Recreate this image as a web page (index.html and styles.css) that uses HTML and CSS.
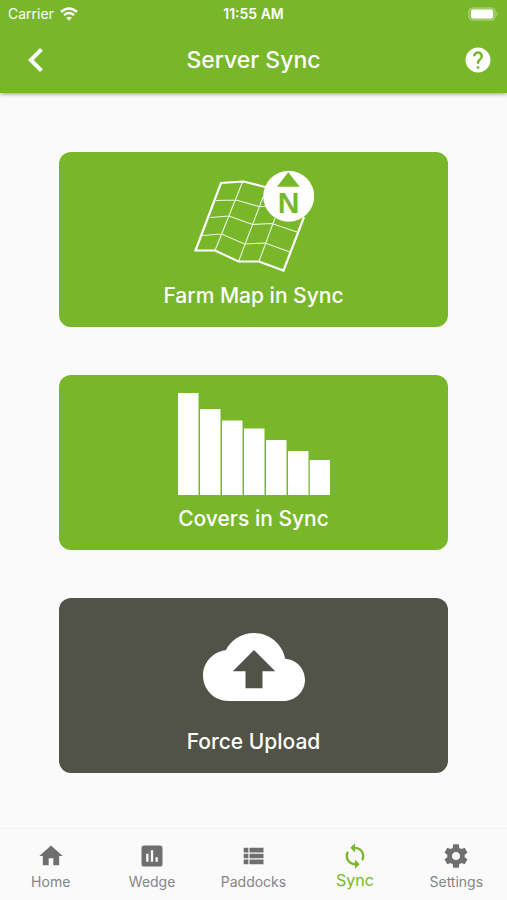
FILE: index.html
```html
<!DOCTYPE html>
<html lang="en">
<head>
<meta charset="utf-8">
<meta name="viewport" content="width=device-width, initial-scale=1">
<title>Server Sync</title>
<link rel="stylesheet" href="styles.css">
</head>
<body>
<header class="header">
  <div class="status">
    <div class="carrier">
      <span>Carrier</span>
      <svg class="wifi" viewBox="0 0 18 14" aria-hidden="true">
        <path d="M1 5Q9-2 17 5" fill="none" stroke="#fff" stroke-width="2.6"/>
        <path d="M4 8.2Q9 4 14 8.2" fill="none" stroke="#fff" stroke-width="2.4"/>
        <path d="M9 13.8 6.2 10.8Q9 8.6 11.8 10.8z" fill="#fff"/>
      </svg>
    </div>
    <time class="clock">11:55 AM</time>
    <svg class="battery" viewBox="0 0 31 14" aria-hidden="true">
      <rect x=".8" y=".8" width="26.4" height="12.4" rx="4" fill="#fff" fill-opacity=".2" stroke="#fff" stroke-opacity=".25" stroke-width="1.2"/>
      <rect x="3" y="2.6" width="22" height="8.8" rx="2" fill="#fff"/>
      <path d="M28.6 4.8q2 2.2 0 4.4z" fill="#fff" fill-opacity=".5"/>
    </svg>
  </div>
  <div class="bar">
    <button class="bar-button back" type="button" aria-label="Back">
      <svg viewBox="0 0 24 24"><path d="M15.41 7.41 14 6l-6 6 6 6 1.41-1.41L10.83 12z"/></svg>
    </button>
    <h1 class="title">Server Sync</h1>
    <button class="bar-button help" type="button" aria-label="Help">
      <svg viewBox="0 0 24 24"><path d="M12 2C6.48 2 2 6.48 2 12s4.48 10 10 10 10-4.48 10-10S17.52 2 12 2zm1 17h-2v-2h2v2zm2.07-7.75-.9.92C13.45 12.9 13 13.5 13 15h-2v-.5c0-1.1.45-2.1 1.17-2.83l1.24-1.26c.37-.36.59-.86.59-1.41 0-1.1-.9-2-2-2s-2 .9-2 2H8c0-2.21 1.79-4 4-4s4 1.79 4 4c0 .88-.36 1.68-.93 2.25z"/></svg>
    </button>
  </div>
</header>
<main class="content">
  <button class="card" type="button">
    <svg class="map-icon" viewBox="0 0 120 102" aria-hidden="true">
      <g fill="none" stroke="#fff">
        <path stroke-width="1.1" stroke-opacity=".85" d="M48.5 12 21 80.5M69 27 44.5 91.5M81 48 65 91.5M22 30.5 42 30l23 6.500h6M16.500 47.500 35 46l23.500 8.500 19.500-1 25 8.500M8 65.500 27.500 64l23 10L71 73l25 9"/>
        <path stroke-width="2.200" d="M71 17 49.500 11.500 27 13 1.500 80.500H21L44.500 91.500H65L89.500 100.500 110 47"/>
      </g>
      <circle cx="94.700" cy="26.300" r="25.500" fill="#fff"/>
      <path class="compass" d="M94.300 2.300 83 16.700h22.700z"/>
      <text class="compass" x="94.700" y="42.500" text-anchor="middle">N</text>
    </svg>
    <span class="card-label">Farm Map in Sync</span>
  </button>
  <button class="card" type="button">
    <svg class="bars-icon" viewBox="0 0 152 102" aria-hidden="true">
      <path fill="#fff" d="M0 0h20.500v102H0zM22 16h20.500v86H22zM44 27.500h20.500v74.500H44zM66 35.500h20.500v66.500H66zM88 47h20.500v55H88zM110 58h20.500v44H110zM131.800 67H152v35h-20.200z"/>
    </svg>
    <span class="card-label">Covers in Sync</span>
  </button>
  <button class="card card-dark" type="button">
    <svg class="cloud-icon" viewBox="0 0 24 24" aria-hidden="true">
      <path fill="#fff" d="M19.350 10.040C18.670 6.590 15.640 4 12 4 9.110 4 6.600 5.640 5.350 8.040 2.340 8.360 0 10.910 0 14c0 3.310 2.690 6 6 6h13c2.760 0 5-2.240 5-5 0-2.640-2.050-4.780-4.650-4.960zM14 13v4h-4v-4H7l5-5 5 5h-3z"/>
    </svg>
    <span class="card-label">Force Upload</span>
  </button>
</main>
<nav class="tabs">
  <a class="tab" href="#home">
    <svg viewBox="0 0 24 24"><path d="M10 20v-6h4v6h5v-8h3L12 3 2 12h3v8z"/></svg>
    <span>Home</span>
  </a>
  <a class="tab" href="#wedge">
    <svg viewBox="0 0 24 24"><path d="M19 3H5c-1.100 0-2 .9-2 2v14c0 1.100.9 2 2 2h14c1.100 0 2-.9 2-2V5c0-1.100-.9-2-2-2zM9 17H7v-7h2v7zm4 0h-2V7h2v10zm4 0h-2v-4h2v4z"/></svg>
    <span>Wedge</span>
  </a>
  <a class="tab" href="#paddocks">
    <svg viewBox="0 0 24 24"><path d="M4 14h4v-4H4v4zm0 5h4v-4H4v4zM4 9h4V5H4v4zm5 5h12v-4H9v4zm0 5h12v-4H9v4zM9 5v4h12V5H9z"/></svg>
    <span>Paddocks</span>
  </a>
  <a class="tab tab-active" href="#sync" aria-current="page">
    <svg viewBox="0 0 24 24"><path d="M12 4V1L8 5l4 4V6c3.310 0 6 2.690 6 6 0 1.010-.25 1.970-.7 2.800l1.460 1.460C19.540 15.030 20 13.570 20 12c0-4.420-3.580-8-8-8zm0 14c-3.310 0-6-2.690-6-6 0-1.010.25-1.970.7-2.800L5.240 7.740C4.460 8.970 4 10.430 4 12c0 4.420 3.580 8 8 8v3l4-4-4-4v3z"/></svg>
    <span>Sync</span>
  </a>
  <a class="tab" href="#settings">
    <svg viewBox="0 0 24 24"><path d="M19.430 12.980c.04-.32.07-.64.07-.98s-.03-.66-.07-.98l2.110-1.650c.19-.15.24-.42.12-.64l-2-3.460c-.12-.22-.39-.3-.61-.22l-2.490 1c-.52-.4-1.080-.73-1.690-.98l-.38-2.650C14.460 2.180 14.250 2 14 2h-4c-.25 0-.46.18-.49.42l-.38 2.650c-.61.25-1.170.59-1.690.98l-2.490-1c-.23-.09-.49 0-.61.22l-2 3.460c-.13.22-.07.49.12.64l2.110 1.650c-.04.32-.07.65-.07.98s.03.66.07.98l-2.110 1.650c-.19.15-.24.42-.12.64l2 3.460c.12.22.39.3.61.22l2.490-1c.52.4 1.080.73 1.690.98l.38 2.650c.03.24.24.42.49.42h4c.25 0 .46-.18.49-.42l.38-2.650c.61-.25 1.170-.59 1.690-.98l2.490 1c.23.09.49 0 .61-.22l2-3.460c.12-.22.07-.49-.12-.64l-2.110-1.650zM12 15.500c-1.930 0-3.500-1.570-3.500-3.500s1.570-3.500 3.500-3.500 3.500 1.570 3.500 3.500-1.570 3.500-3.500 3.500z"/></svg>
    <span>Settings</span>
  </a>
</nav>
</body>
</html>
```
FILE: styles.css
```css
:root {
  --green: #79b72a;
  --dark: #525348;
  --grey: #6f6f6f;
}

* {
  box-sizing: border-box;
}

body {
  margin: 0;
  min-height: 100vh;
  display: flex;
  flex-direction: column;
  background: #fafafa;
  font-family: Inter, "Liberation Sans", sans-serif;
}

button {
  margin: 0;
  padding: 0;
  border: 0;
  background: none;
  color: inherit;
  font: inherit;
}

svg {
  display: block;
  fill: currentColor;
}

.header {
  background: var(--green);
  color: #fff;
  box-shadow: 0 1px 4px rgba(0, 0, 0, 0.4);
}

.status {
  display: grid;
  grid-template-columns: 1fr auto 1fr;
  align-items: center;
  height: 27px;
  padding: 0 8px;
  font-size: 14px;
}

.carrier {
  display: flex;
  align-items: center;
  gap: 6px;
}

.wifi {
  width: 18px;
  height: 14px;
}

.clock {
  font-weight: 600;
}

.battery {
  width: 31px;
  height: 14px;
  justify-self: end;
}

.bar {
  display: grid;
  grid-template-columns: 60px 1fr 60px;
  align-items: center;
  height: 66px;
}

.bar-button {
  display: grid;
  place-items: center;
  height: 48px;
}

.back {
  padding-left: 12px;
}

.back svg {
  width: 48px;
  height: 48px;
}

.help svg {
  width: 30px;
  height: 30px;
}

.title {
  margin: 0;
  font-size: 23px;
  font-weight: 500;
  text-align: center;
}

.content {
  flex: 1;
  display: flex;
  flex-direction: column;
  gap: 48px;
  padding: 59px 59px 54px;
}

.card {
  display: flex;
  flex-direction: column;
  align-items: center;
  gap: 8px;
  padding: 18px 0 15px;
  border-radius: 12px;
  background: var(--green);
  color: #fff;
}

.card-dark {
  background: var(--dark);
}

.card-label {
  font-size: 21px;
  font-weight: 500;
  line-height: 32px;
}

.map-icon {
  width: 120px;
  height: 102px;
}

.bars-icon {
  width: 152px;
  height: 102px;
}

.cloud-icon {
  width: 102px;
  height: 102px;
}

.compass {
  fill: var(--green);
  font: bold 30px "Liberation Sans", sans-serif;
}

.help {
  padding-left: 2px;
}

.tabs {
  display: grid;
  grid-template-columns: repeat(5, 1fr);
  height: 72px;
  border-top: 1px solid #f3f3f3;
}

.tab {
  display: flex;
  flex-direction: column;
  align-items: center;
  gap: 2px;
  padding-top: 13px;
  color: var(--grey);
  font-size: 14px;
  line-height: 20px;
  text-decoration: none;
}

.tab span {
  color: #858585;
}

.tab svg {
  width: 28px;
  height: 28px;
}

.tab-active,
.tab-active span {
  color: var(--green);
}

.tab-active {
  gap: 0;
  font-size: 16px;
}
```
